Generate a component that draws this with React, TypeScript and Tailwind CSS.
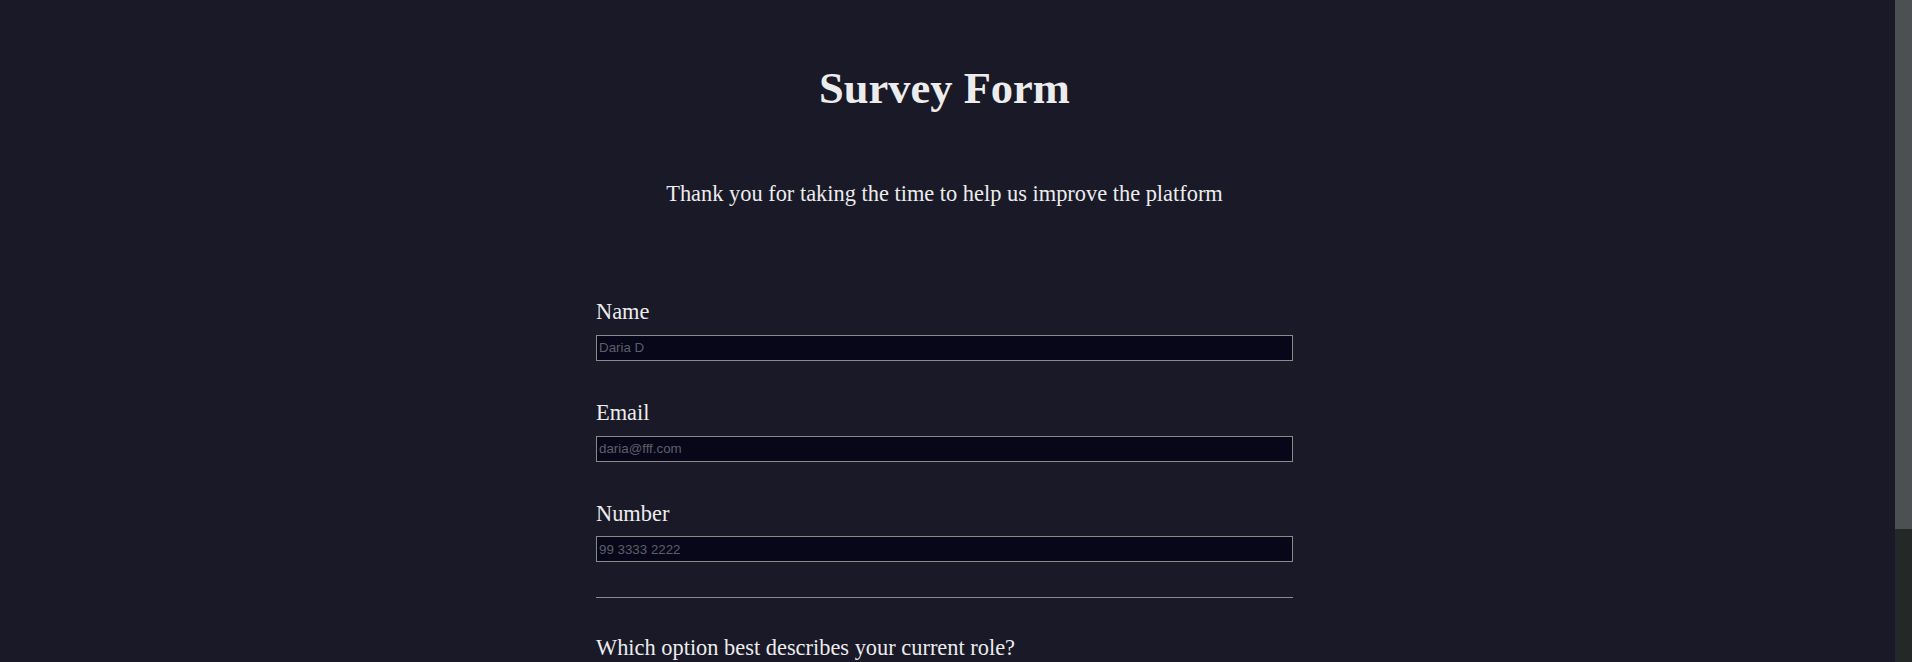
import React from "react";

const fields = [
  { id: "name", label: "Name", type: "text", placeholder: "Daria D" },
  { id: "email", label: "Email", type: "email", placeholder: "daria@fff.com" },
  { id: "number", label: "Number", type: "text", placeholder: "99 3333 2222" },
];

function Field({
  id,
  label,
  type,
  placeholder,
}: {
  id: string;
  label: string;
  type: string;
  placeholder: string;
}) {
  return (
    <div className="flex flex-col">
      <label htmlFor={id} className="leading-[1.107]">
        {label}
      </label>
      <input
        id={id}
        type={type}
        placeholder={placeholder}
        className="mt-[10px] h-[26px] w-full border border-[#8a8a8a] bg-[#070719] px-[2px] font-['Liberation_Sans',Arial,sans-serif] text-[13.333px] text-[#dddddd] outline-none placeholder:text-[#5e5e68]"
      />
    </div>
  );
}

export default function App() {
  return (
    <div className="flex h-[662px] overflow-hidden bg-[#191928] text-[#ececec]">
      <main className="flex-1 overflow-hidden">
        <div className="flex min-h-[830px] flex-col items-center pr-[6px] font-['Liberation_Serif','Times_New_Roman',serif] text-[22.4px]">
          <h1 className="mt-[64px] text-[44.5px] font-bold leading-[1.107]">
            Survey Form
          </h1>
          <p className="mt-[69px] leading-[1.107]">
            Thank you for taking the time to help us improve the platform
          </p>

          <form className="mt-[93px] flex w-[697px] flex-col">
            <div className="flex flex-col gap-[40px]">
              {fields.map((f) => (
                <Field key={f.id} {...f} />
              ))}
            </div>

            <hr className="mt-[35px] border-t border-[#8a8a8a]" />

            <div className="mt-[38px] flex flex-col">
              <label htmlFor="role" className="leading-[1.107]">
                Which option best describes your current role?
              </label>
              <select
                id="role"
                className="mt-[10px] h-[26px] w-full border border-[#8a8a8a] bg-[#070719] font-['Liberation_Sans',Arial,sans-serif] text-[13.333px] text-[#dddddd]"
              >
                <option>Select current role</option>
                <option>Student</option>
                <option>Full Time Job</option>
                <option>Prefer not to say</option>
              </select>
            </div>
          </form>
        </div>
      </main>

      {/* page scrollbar */}
      <aside className="flex w-[17px] shrink-0 flex-col bg-[#242928]">
        <div className="h-[529px] bg-[#4c5052]" />
      </aside>
    </div>
  );
}
